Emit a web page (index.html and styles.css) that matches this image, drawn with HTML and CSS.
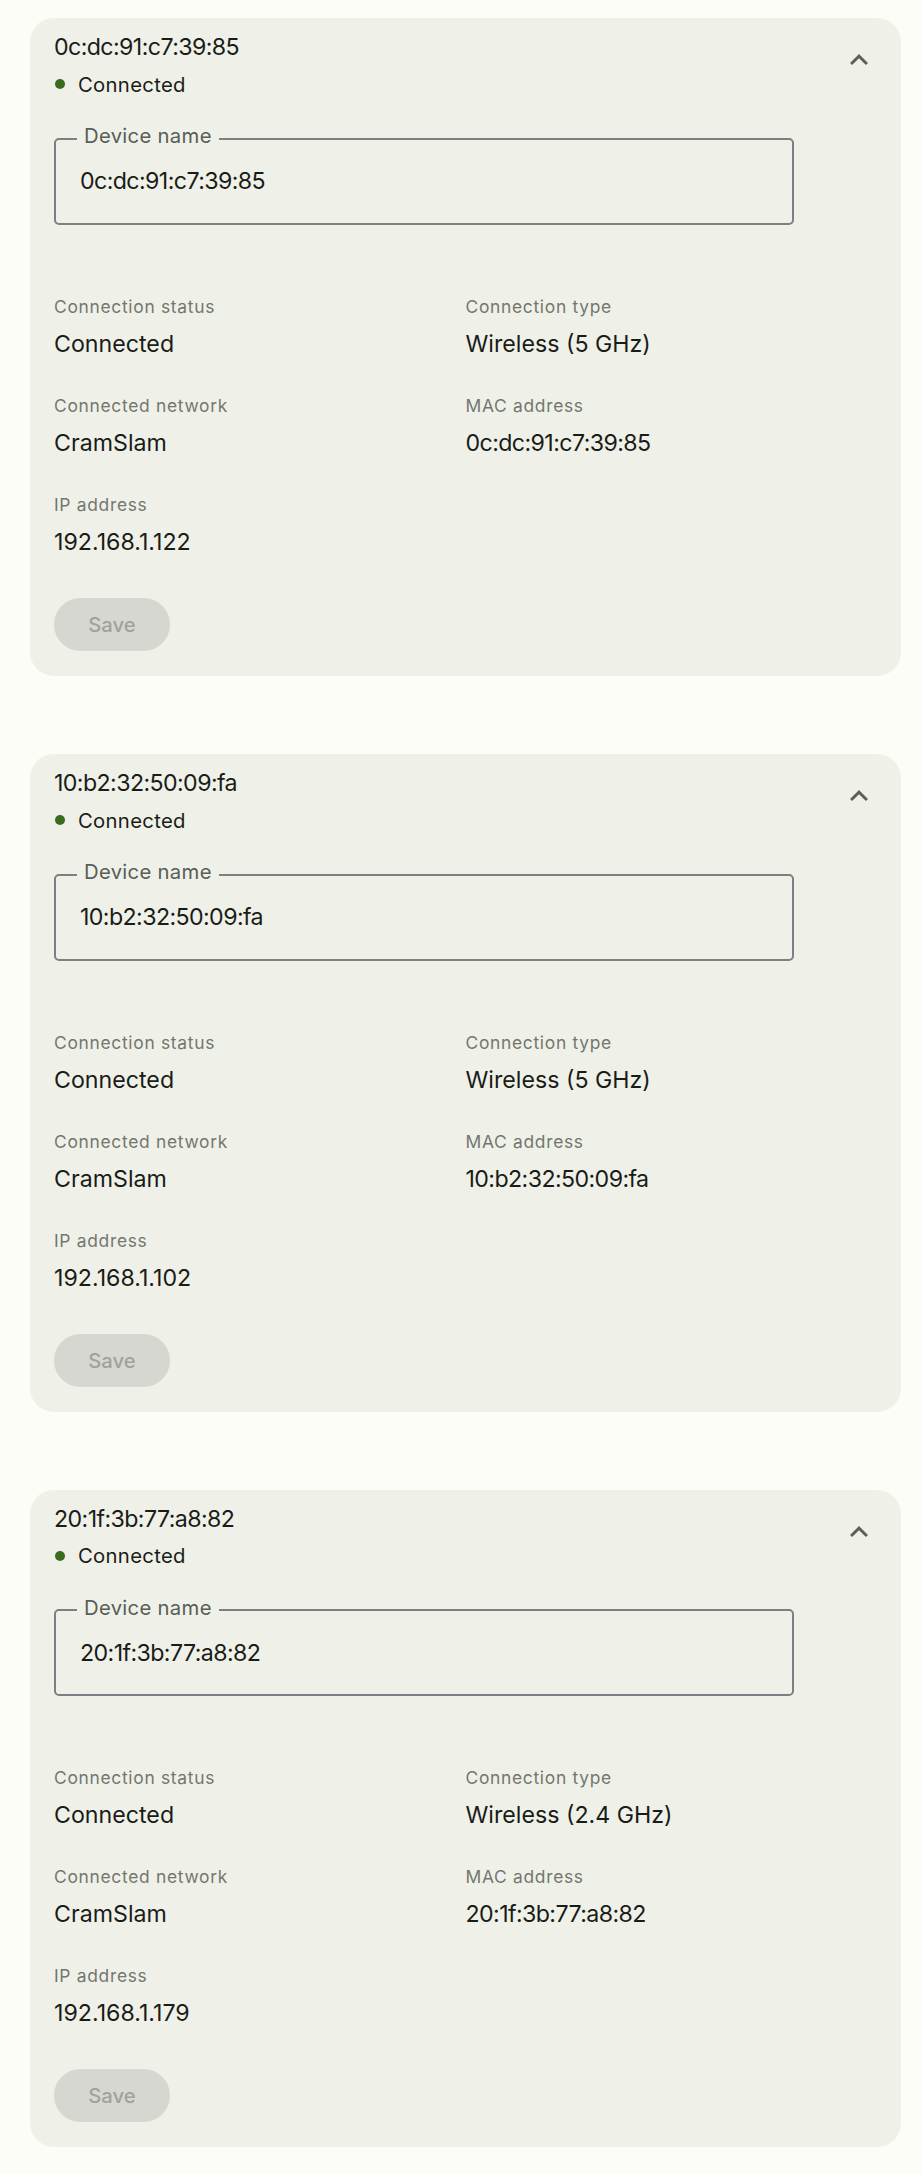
FILE: index.html
```html
<!DOCTYPE html>
<html lang="en">
<head>
<meta charset="utf-8">
<title>Devices</title>
<link rel="stylesheet" href="styles.css">
</head>
<body>
<main class="list">

  <section class="card">
    <div class="head">
      <div class="head-info">
        <div class="title addr">0c:dc:91:c7:39:85</div>
        <div class="status"><span class="dot"></span>Connected</div>
      </div>
      <button class="collapse" aria-label="Collapse">
        <svg viewBox="0 0 24 24" width="36" height="36"><path d="M12 8l-6 6 1.41 1.41L12 10.83l4.59 4.58L18 14z"/></svg>
      </button>
    </div>
    <div class="field">
      <span class="field-label">Device name</span>
      <input class="field-input addr" type="text" value="0c:dc:91:c7:39:85">
    </div>
    <div class="details">
      <div class="item"><div class="label">Connection status</div><div class="value">Connected</div></div>
      <div class="item"><div class="label">Connection type</div><div class="value">Wireless (5 GHz)</div></div>
      <div class="item"><div class="label">Connected network</div><div class="value">CramSlam</div></div>
      <div class="item"><div class="label">MAC address</div><div class="value addr">0c:dc:91:c7:39:85</div></div>
      <div class="item"><div class="label">IP address</div><div class="value">192.168.1.122</div></div>
    </div>
    <button class="save" disabled>Save</button>
  </section>

  <section class="card">
    <div class="head">
      <div class="head-info">
        <div class="title addr">10:b2:32:50:09:fa</div>
        <div class="status"><span class="dot"></span>Connected</div>
      </div>
      <button class="collapse" aria-label="Collapse">
        <svg viewBox="0 0 24 24" width="36" height="36"><path d="M12 8l-6 6 1.41 1.41L12 10.83l4.59 4.58L18 14z"/></svg>
      </button>
    </div>
    <div class="field">
      <span class="field-label">Device name</span>
      <input class="field-input addr" type="text" value="10:b2:32:50:09:fa">
    </div>
    <div class="details">
      <div class="item"><div class="label">Connection status</div><div class="value">Connected</div></div>
      <div class="item"><div class="label">Connection type</div><div class="value">Wireless (5 GHz)</div></div>
      <div class="item"><div class="label">Connected network</div><div class="value">CramSlam</div></div>
      <div class="item"><div class="label">MAC address</div><div class="value addr">10:b2:32:50:09:fa</div></div>
      <div class="item"><div class="label">IP address</div><div class="value">192.168.1.102</div></div>
    </div>
    <button class="save" disabled>Save</button>
  </section>

  <section class="card">
    <div class="head">
      <div class="head-info">
        <div class="title addr">20:1f:3b:77:a8:82</div>
        <div class="status"><span class="dot"></span>Connected</div>
      </div>
      <button class="collapse" aria-label="Collapse">
        <svg viewBox="0 0 24 24" width="36" height="36"><path d="M12 8l-6 6 1.41 1.41L12 10.83l4.59 4.58L18 14z"/></svg>
      </button>
    </div>
    <div class="field">
      <span class="field-label">Device name</span>
      <input class="field-input addr" type="text" value="20:1f:3b:77:a8:82">
    </div>
    <div class="details">
      <div class="item"><div class="label">Connection status</div><div class="value">Connected</div></div>
      <div class="item"><div class="label">Connection type</div><div class="value">Wireless (2.4 GHz)</div></div>
      <div class="item"><div class="label">Connected network</div><div class="value">CramSlam</div></div>
      <div class="item"><div class="label">MAC address</div><div class="value addr">20:1f:3b:77:a8:82</div></div>
      <div class="item"><div class="label">IP address</div><div class="value">192.168.1.179</div></div>
    </div>
    <button class="save" disabled>Save</button>
  </section>

</main>
</body>
</html>
```
FILE: styles.css
```css
* { box-sizing: border-box; }

html, body {
  margin: 0;
  padding: 0;
  background: #fcfdf6;
}

body {
  font-family: Inter, "Noto Sans", "Liberation Sans", sans-serif;
  color: #1a1c18;
}

.list {
  display: flex;
  flex-direction: column;
  gap: 78px;
  padding: 18px 21px 26px 30px;
}

.card {
  background: #eff1e9;
  border-radius: 24px;
  padding: 12px 24px 25px 24px;
  display: flex;
  flex-direction: column;
  align-items: flex-start;
}

.head {
  display: flex;
  align-items: flex-start;
  justify-content: space-between;
  width: 100%;
}

.title {
  font-size: 23.2px;
  line-height: 34.8px;
  color: #1a1c18;
}

.addr {
  letter-spacing: -0.6px;
}

.status {
  margin-top: 5px;
  display: flex;
  align-items: center;
  font-size: 20.3px;
  line-height: 29px;
  letter-spacing: 0.3px;
  color: #1a1c18;
}

.dot {
  width: 10px;
  height: 10px;
  border-radius: 50%;
  background: #386a20;
  margin: 0 13px 0 1px;
}

.collapse {
  width: 48px;
  height: 48px;
  margin: 6px -6px 0 0;
  padding: 0;
  border: none;
  background: transparent;
  display: flex;
  align-items: center;
  justify-content: center;
}

.collapse svg { fill: #5c5f58; display: block; }

.field {
  position: relative;
  margin-top: 39px;
  width: 740px;
  height: 87px;
  border: 2px solid #7d8083;
  border-radius: 5px;
  display: flex;
  align-items: center;
  padding-left: 24px;
}

.field-label {
  position: absolute;
  top: -18.5px;
  left: 21px;
  padding: 0 7px;
  background: #eff1e9;
  font-size: 20.3px;
  line-height: 29px;
  letter-spacing: 0.3px;
  color: #595d57;
}

.field-input {
  border: none;
  outline: none;
  background: transparent;
  padding: 0;
  margin: 0;
  width: 100%;
  font-family: inherit;
  font-size: 23.2px;
  line-height: 34px;
  color: #1a1c18;
}

.details {
  margin-top: 70px;
  width: 100%;
  display: grid;
  grid-template-columns: 1fr 1fr;
  row-gap: 33px;
}

.label {
  font-size: 17.4px;
  line-height: 24px;
  letter-spacing: 0.7px;
  color: #73776f;
}

.value {
  margin-top: 8px;
  font-size: 23.2px;
  line-height: 34px;
  color: #1a1c18;
}

.save {
  margin-top: 39px;
  width: 116px;
  height: 53px;
  border: none;
  border-radius: 27px;
  background: #d6d7d0;
  color: #a0a29c;
  font-family: inherit;
  font-size: 20.3px;
  font-weight: 500;
  padding: 0;
}
```
